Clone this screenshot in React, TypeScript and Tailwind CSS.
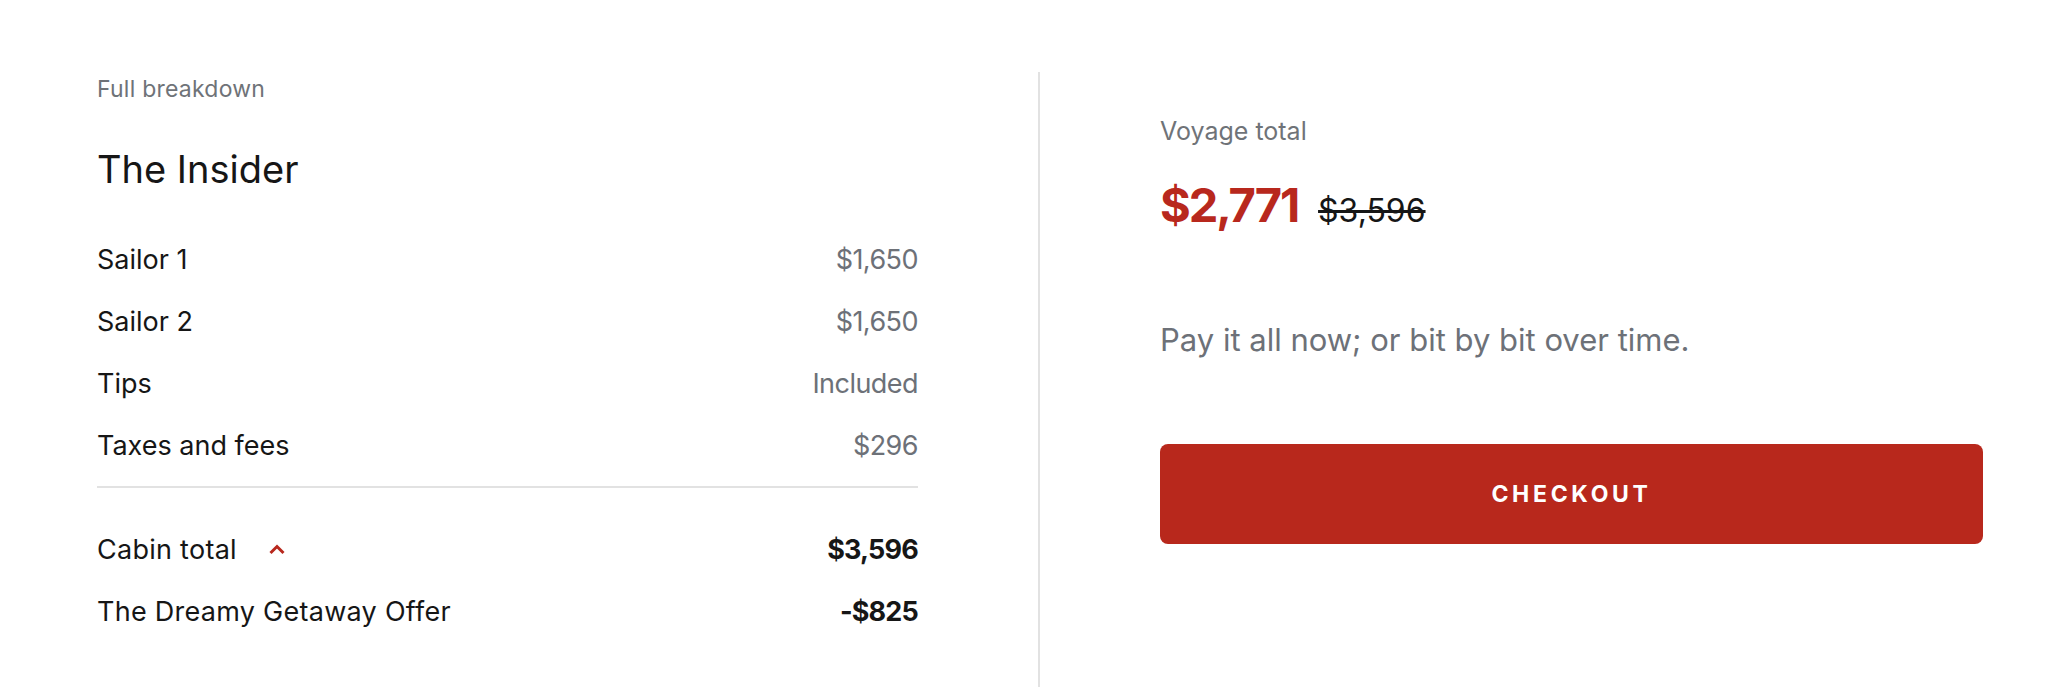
const rows = [
  { label: "Sailor 1", value: "$1,650" },
  { label: "Sailor 2", value: "$1,650" },
  { label: "Tips", value: "Included" },
  { label: "Taxes and fees", value: "$296" },
];

const ChevronUp = () => (
  <svg width="18" height="11" viewBox="0 0 18 11" fill="none" className="ml-[31px]">
    <path d="M2.5 9 L9 2.5 L15.5 9" stroke="#b8281d" strokeWidth="3" strokeLinejoin="miter" />
  </svg>
);

export default function App() {
  return (
    <div className="flex h-[687px] w-full bg-white font-['Inter',sans-serif] text-[#161616]">
      {/* breakdown */}
      <div className="ml-[97px] w-[821px] pt-[78px]">
        <div className="text-[23px] leading-none tracking-[0.01em] text-[#6f7378]">Full breakdown</div>
        <h2 className="mt-[49px] text-[38px] leading-none">The Insider</h2>
        <div className="mt-[40px]">
          {rows.map((r) => (
            <div key={r.label} className="flex h-[62px] items-center justify-between text-[27px] leading-none">
              <span>{r.label}</span>
              <span className="tracking-[-0.02em] text-[#6d7178]">{r.value}</span>
            </div>
          ))}
        </div>
        <div className="mt-[10px] h-[2px] bg-[#e2e2e2]" />
        <div className="mt-[30px]">
          <div className="flex h-[62px] items-center justify-between text-[27px] leading-none">
            <span className="flex items-center tracking-[0.01em]">
              Cabin total
              <ChevronUp />
            </span>
            <span className="font-bold tracking-[-0.03em]">$3,596</span>
          </div>
          <div className="flex h-[62px] items-center justify-between text-[27px] leading-none">
            <span className="tracking-[0.01em]">The Dreamy Getaway Offer</span>
            <span className="font-bold tracking-[-0.03em]">-$825</span>
          </div>
        </div>
      </div>

      <div className="ml-[120px] mt-[72px] w-[2px] self-stretch bg-[#e2e2e2]" />

      {/* total */}
      <div className="ml-[120px] w-[823px] pt-[119px]">
        <div className="text-[25px] leading-none text-[#6f7378]">Voyage total</div>
        <div className="mt-[37px] flex items-baseline gap-[20px] leading-none">
          <span className="text-[47px] font-bold tracking-[-0.045em] text-[#b8281d]">$2,771</span>
          <span className="text-[32px] line-through decoration-[3px]">$3,596</span>
        </div>
        <p className="mt-[96px] text-[31px] leading-none text-[#6d7178]">
          Pay it all now; or bit by bit over time.
        </p>
        <button className="mt-[89px] flex h-[100px] w-full items-center justify-center rounded-[8px] bg-[#b8281c] text-[23px] font-bold leading-none tracking-[0.16em] text-white">
          CHECKOUT
        </button>
      </div>
    </div>
  );
}
